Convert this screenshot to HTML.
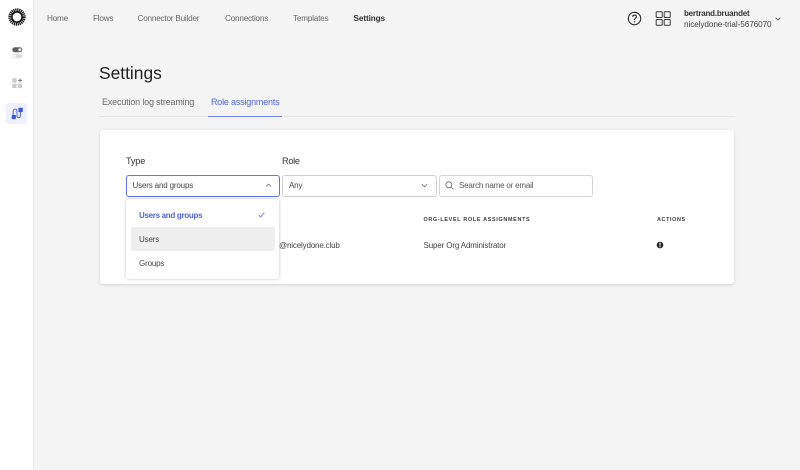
<!DOCTYPE html>
<html lang="en">
<head>
<meta charset="utf-8">
<title>Settings</title>
<style>
html,body{margin:0;padding:0;width:800px;height:470px;overflow:hidden;background:#f4f4f4;font-family:"Liberation Sans",sans-serif;color:#333}
.t{position:absolute;white-space:nowrap;line-height:16px;font-size:8px;letter-spacing:-.16px}
.b{position:absolute;box-sizing:border-box}
svg{position:absolute;overflow:visible}
.nav{top:11px;color:#666;font-size:8.2px;letter-spacing:-.22px}
</style>
</head>
<body>
<div class="b" style="left:0;top:0;width:34px;height:470px;background:#fff;border-right:1px solid #ebebeb"></div>

<!-- logo -->
<svg style="left:8px;top:8px" width="18" height="18" viewBox="0 0 18 18">
<circle cx="9" cy="9" r="5.1" fill="none" stroke="#111" stroke-width="1.5"/>
<circle cx="9" cy="9" r="6.9" fill="none" stroke="#111" stroke-width="3.6" stroke-dasharray="1.15 .656"/>
</svg>

<!-- sidebar toggles -->
<svg style="left:12px;top:47px" width="11" height="12" viewBox="0 0 11 12">
<rect x="0.3" y="0.3" width="10" height="5" rx="2.5" fill="#5f5f5f"/>
<circle cx="7.8" cy="2.8" r="1.5" fill="#eee"/>
<rect x="0.3" y="7" width="10" height="4.2" rx="2.1" fill="#dcdcdc"/>
<circle cx="2.6" cy="9.1" r="1.4" fill="#fff"/>
</svg>
<!-- sidebar apps -->
<svg style="left:12px;top:78px" width="11" height="11" viewBox="0 0 11 11">
<rect x="0.3" y="0.3" width="4.3" height="4.3" rx=".5" fill="#cbcbcb"/>
<rect x="0.3" y="5.8" width="4.3" height="4.3" rx=".5" fill="#cbcbcb"/>
<rect x="5.8" y="5.8" width="4.3" height="4.3" rx=".5" fill="#cbcbcb"/>
<path d="M8 .4V4.4M6 2.4H10" stroke="#777" stroke-width="1"/>
</svg>
<!-- sidebar active -->
<div class="b" style="left:6px;top:103px;width:21px;height:21px;background:#eef1fd;border-radius:3px"></div>
<svg style="left:11px;top:107px" width="12" height="12" viewBox="0 0 12 12">
<rect x="7.4" y="0.7" width="4.4" height="4.4" rx=".7" fill="#3d56e0"/>
<rect x="0.7" y="7.9" width="4.2" height="4.2" rx=".7" fill="#3d56e0"/>
<path d="M2.2 7.9V4.2C2.2 1.4 6 1.4 6 4.2V8.6C6 11.4 9.4 11.4 9.4 8.6V5" fill="none" stroke="#5269e4" stroke-width="1"/>
</svg>

<!-- nav -->
<div class="t nav" style="left:47px">Home</div>
<div class="t nav" style="left:93px">Flows</div>
<div class="t nav" style="left:137.5px">Connector Builder</div>
<div class="t nav" style="left:225px">Connections</div>
<div class="t nav" style="left:293px">Templates</div>
<div class="t nav" style="left:353.5px;color:#333;font-weight:bold;font-size:8.2px;letter-spacing:-.1px">Settings</div>

<!-- help -->
<svg style="left:627px;top:11px" width="15" height="15" viewBox="0 0 15 15">
<circle cx="7.5" cy="7.5" r="6.2" fill="none" stroke="#2b2b2b" stroke-width="1.1"/>
<path d="M5.6 5.8C5.7 3.6 9.4 3.6 9.4 5.8 9.4 7.2 7.5 7.2 7.5 8.9" fill="none" stroke="#2b2b2b" stroke-width="1.1"/>
<circle cx="7.5" cy="10.9" r=".7" fill="#2b2b2b"/>
</svg>
<!-- grid -->
<svg style="left:655px;top:11px" width="16" height="15" viewBox="0 0 16 15">
<g fill="none" stroke="#3a3a3a" stroke-width="1">
<rect x="1.2" y=".7" width="6" height="5.8" rx=".6"/>
<rect x="9.2" y=".7" width="6" height="5.8" rx=".6"/>
<rect x="1.2" y="8.5" width="6" height="5.8" rx=".6"/>
<rect x="9.2" y="8.5" width="6" height="5.8" rx=".6"/>
</g>
</svg>
<div class="t" style="left:684px;top:6px;font-weight:bold;font-size:8px;letter-spacing:-.2px;color:#333">bertrand.bruandet</div>
<div class="t" style="left:684px;top:17px;font-size:8.2px;letter-spacing:-.09px;color:#444">nicelydone-trial-5676070</div>
<svg style="left:775px;top:17px" width="6" height="4" viewBox="0 0 6 4"><path d="M.6.8 3 3 5.4.8" fill="none" stroke="#555" stroke-width=".9"/></svg>

<!-- title -->
<div class="t" style="left:99px;top:62px;font-size:17.4px;line-height:22px;letter-spacing:0;color:#222">Settings</div>

<!-- tabs -->
<div class="t" style="left:102px;top:94px;font-size:9px;letter-spacing:-.17px;color:#6a6a6a">Execution log streaming</div>
<div class="t" style="left:211px;top:94px;font-size:9px;letter-spacing:-.19px;color:#4f65e3">Role assignments</div>
<div class="b" style="left:99px;top:116px;width:636px;height:1px;background:#e4e4e4"></div>
<div class="b" style="left:208px;top:115.5px;width:74px;height:1.5px;background:#6f83ee"></div>

<!-- card -->
<div class="b" style="left:100px;top:130px;width:634px;height:154px;background:#fff;border-radius:3px;box-shadow:0 1px 3px rgba(0,0,0,.14)"></div>

<div class="t" style="left:126px;top:153px;font-size:9.2px;letter-spacing:-.2px;color:#333">Type</div>
<div class="t" style="left:282px;top:153px;font-size:9.2px;letter-spacing:-.3px;color:#333">Role</div>

<!-- type select -->
<div class="b" style="left:125.5px;top:174.5px;width:154.5px;height:22px;background:#fff;border:1px solid #5f76ea;border-radius:3px"></div>
<div class="t" style="left:132.5px;top:178px;color:#444">Users and groups</div>
<svg style="left:265px;top:183px" width="7" height="5" viewBox="0 0 7 5"><path d="M.9 3.6 3.5 1.1 6.1 3.6" fill="none" stroke="#777" stroke-width=".9"/></svg>

<!-- role select -->
<div class="b" style="left:282px;top:174.5px;width:154.5px;height:22px;background:#fff;border:1px solid #cfcfcf;border-radius:3px"></div>
<div class="t" style="left:289px;top:178px;color:#444">Any</div>
<svg style="left:421px;top:183px" width="7" height="5" viewBox="0 0 7 5"><path d="M.9 1.2 3.5 3.7 6.1 1.2" fill="none" stroke="#777" stroke-width=".9"/></svg>

<!-- search -->
<div class="b" style="left:438.5px;top:174.5px;width:154.5px;height:22px;background:#fff;border:1px solid #d4d4d4;border-radius:3px"></div>
<svg style="left:445px;top:181px" width="9" height="9" viewBox="0 0 9 9"><circle cx="3.8" cy="3.8" r="3" fill="none" stroke="#666" stroke-width=".8"/><path d="M6 6 8.4 8.4" stroke="#666" stroke-width=".8"/></svg>
<div class="t" style="left:459px;top:178px;letter-spacing:-.2px;color:#555">Search name or email</div>

<!-- table -->
<div class="t" style="left:423.5px;top:212px;font-size:5.4px;font-weight:bold;letter-spacing:.7px;color:#3a3a3a">ORG-LEVEL ROLE ASSIGNMENTS</div>
<div class="t" style="left:657px;top:211.5px;font-size:5.4px;font-weight:bold;letter-spacing:.65px;color:#3a3a3a">ACTIONS</div>
<div class="t" style="left:279px;top:238px;color:#444">@nicelydone.club</div>
<div class="t" style="left:423.5px;top:238px;letter-spacing:-.14px;color:#444">Super Org Administrator</div>
<svg style="left:656px;top:241px" width="8" height="8" viewBox="0 0 8 8"><circle cx="4" cy="4" r="3.3" fill="#222"/><rect x="3.4" y="1.7" width="1.2" height="2.8" fill="#fff"/><rect x="3.4" y="5.1" width="1.2" height="1.1" fill="#fff"/></svg>

<!-- dropdown -->
<div class="b" style="left:126px;top:199px;width:153px;height:80px;background:#fff;border-radius:3px;box-shadow:0 0 3px rgba(0,0,0,.25)"></div>
<div class="b" style="left:131px;top:227px;width:144px;height:24px;background:#eeeeee;border-radius:2px"></div>
<div class="t" style="left:139px;top:208px;font-weight:bold;letter-spacing:-.3px;color:#4f65e3">Users and groups</div>
<svg style="left:258px;top:212px" width="7" height="6" viewBox="0 0 7 6"><path d="M.7 3 2.6 5 6.3.8" fill="none" stroke="#5f76ea" stroke-width=".9"/></svg>
<div class="t" style="left:139px;top:232px;color:#444">Users</div>
<div class="t" style="left:139px;top:256px;color:#444">Groups</div>
</body>
</html>
